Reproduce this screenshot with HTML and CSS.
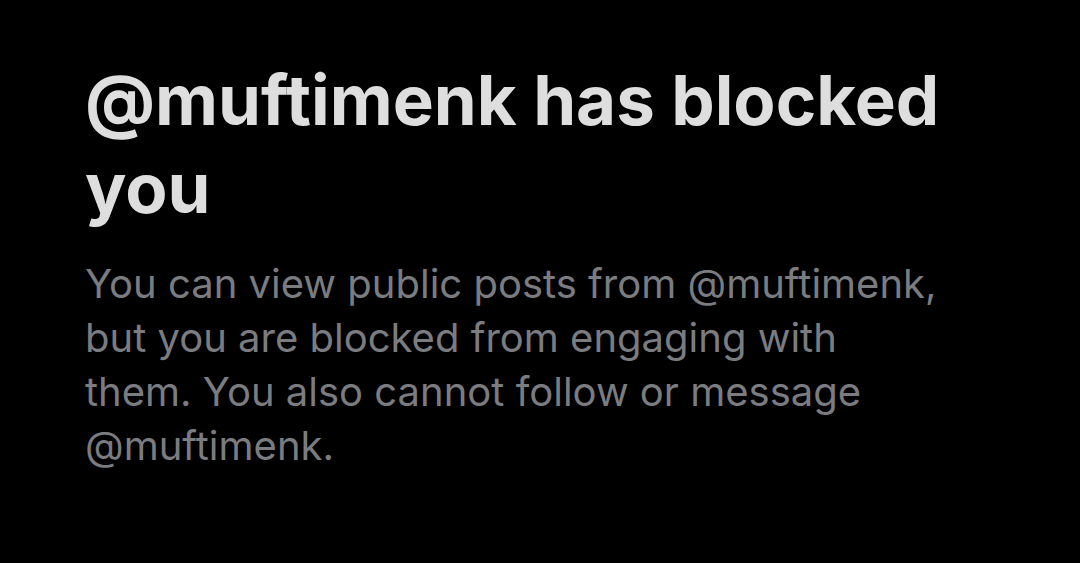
FILE: index.html
```html
<!DOCTYPE html>
<html lang="en">
<head>
    <meta charset="UTF-8">
    <meta name="viewport" content="width=device-width, initial-scale=1.0">
    <title>Blocked</title>
    <link rel="stylesheet" href="styles.css">
</head>
<body>
    <div class="blocked-container">
        <h1>@muftimenk has blocked you</h1>
        <p class="blocked-text">You can view public posts from @muftimenk, but you are blocked from engaging with them. You also cannot follow or message @muftimenk.</p>
    </div>
</body>
</html>
```

FILE: styles.css
```css
body {
    margin: 0;
    background-color: #000;
    font-family: Inter, "Open Sans", sans-serif;
    height: 563px;
    overflow: hidden;
}
.blocked-container {
    padding: 56px 0 0 85px;
    width: 866px;
}
h1 {
    margin: 0;
    color: #dedede;
    font-size: 69px;
    line-height: 88px;
    font-weight: 700;
}
.blocked-text {
    margin: 25px 0 0;
    color: #7a7c80;
    font-size: 40px;
    line-height: 54px;
}
```
